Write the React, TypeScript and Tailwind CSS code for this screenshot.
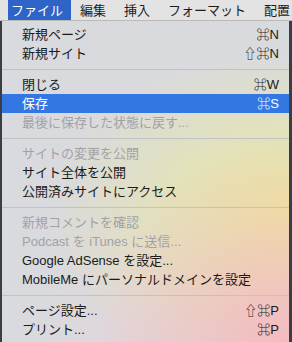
import React from 'react';

type Item =
  | { type: 'item'; label: string; shortcut?: string; disabled?: boolean; active?: boolean }
  | { type: 'sep' };

const menuTitles = ['編集', '挿入', 'フォーマット', '配置'];

const items: Item[] = [
  { type: 'item', label: '新規ページ', shortcut: '⌘N' },
  { type: 'item', label: '新規サイト', shortcut: '⇧⌘N' },
  { type: 'sep' },
  { type: 'item', label: '閉じる', shortcut: '⌘W' },
  { type: 'item', label: '保存', shortcut: '⌘S', active: true },
  { type: 'item', label: '最後に保存した状態に戻す...', disabled: true },
  { type: 'sep' },
  { type: 'item', label: 'サイトの変更を公開', disabled: true },
  { type: 'item', label: 'サイト全体を公開' },
  { type: 'item', label: '公開済みサイトにアクセス' },
  { type: 'sep' },
  { type: 'item', label: '新規コメントを確認', disabled: true },
  { type: 'item', label: 'Podcast を iTunes に送信...', disabled: true },
  { type: 'item', label: 'Google AdSense を設定...' },
  { type: 'item', label: 'MobileMe にパーソナルドメインを設定' },
  { type: 'sep' },
  { type: 'item', label: 'ページ設定...', shortcut: '⇧⌘P' },
  { type: 'item', label: 'プリント...', shortcut: '⌘P' },
];

const App = () => {
  return (
    <div className="w-[292px] h-[342px] overflow-hidden bg-[#3b3d44] font-['Liberation_Sans','Noto_Sans_CJK_JP',sans-serif] text-[13px] leading-none">
      {/* メニューバー */}
      <div className="h-[21px] flex items-stretch bg-[#e3e3e3] border-b border-[#b9b9b9] text-[#1c1c1c]">
        <div className="ml-[8px] w-[63px] flex items-center pl-[3px] bg-[#2e64c8] text-white">
          ファイル
        </div>
        <div className="flex items-center gap-[18px] ml-[9px]">
          {menuTitles.map((t) => (
            <span key={t}>{t}</span>
          ))}
        </div>
      </div>

      {/* ファイルメニュー */}
      <div className="ml-[2px] w-[287px] h-[330px] rounded-b-[5px] pt-[4px] bg-[#d9dade] bg-[image:radial-gradient(ellipse_at_100%_108%,rgba(248,182,190,1),rgba(248,182,190,0)_48%),radial-gradient(ellipse_at_100%_58%,rgba(236,234,150,0.95),rgba(236,234,150,0)_60%),radial-gradient(ellipse_at_45%_115%,rgba(236,208,214,0.5),rgba(236,208,214,0)_45%)]">
        {items.map((item, i) =>
          item.type === 'sep' ? (
            <div key={i} className="h-[12px] flex items-center">
              <div className="h-px w-full bg-[#c2c2c4]" />
            </div>
          ) : (
            <div
              key={i}
              className={`h-[19px] flex items-center justify-between pl-[20px] pr-[10px] ${
                item.active
                  ? 'bg-[#3577e2] text-white'
                  : item.disabled
                  ? 'text-[#a2a2a6]'
                  : 'text-[#1a1a1a]'
              }`}
            >
              <span>{item.label}</span>
              {item.shortcut && <span>{item.shortcut}</span>}
            </div>
          )
        )}
      </div>
    </div>
  );
};

export default App;
